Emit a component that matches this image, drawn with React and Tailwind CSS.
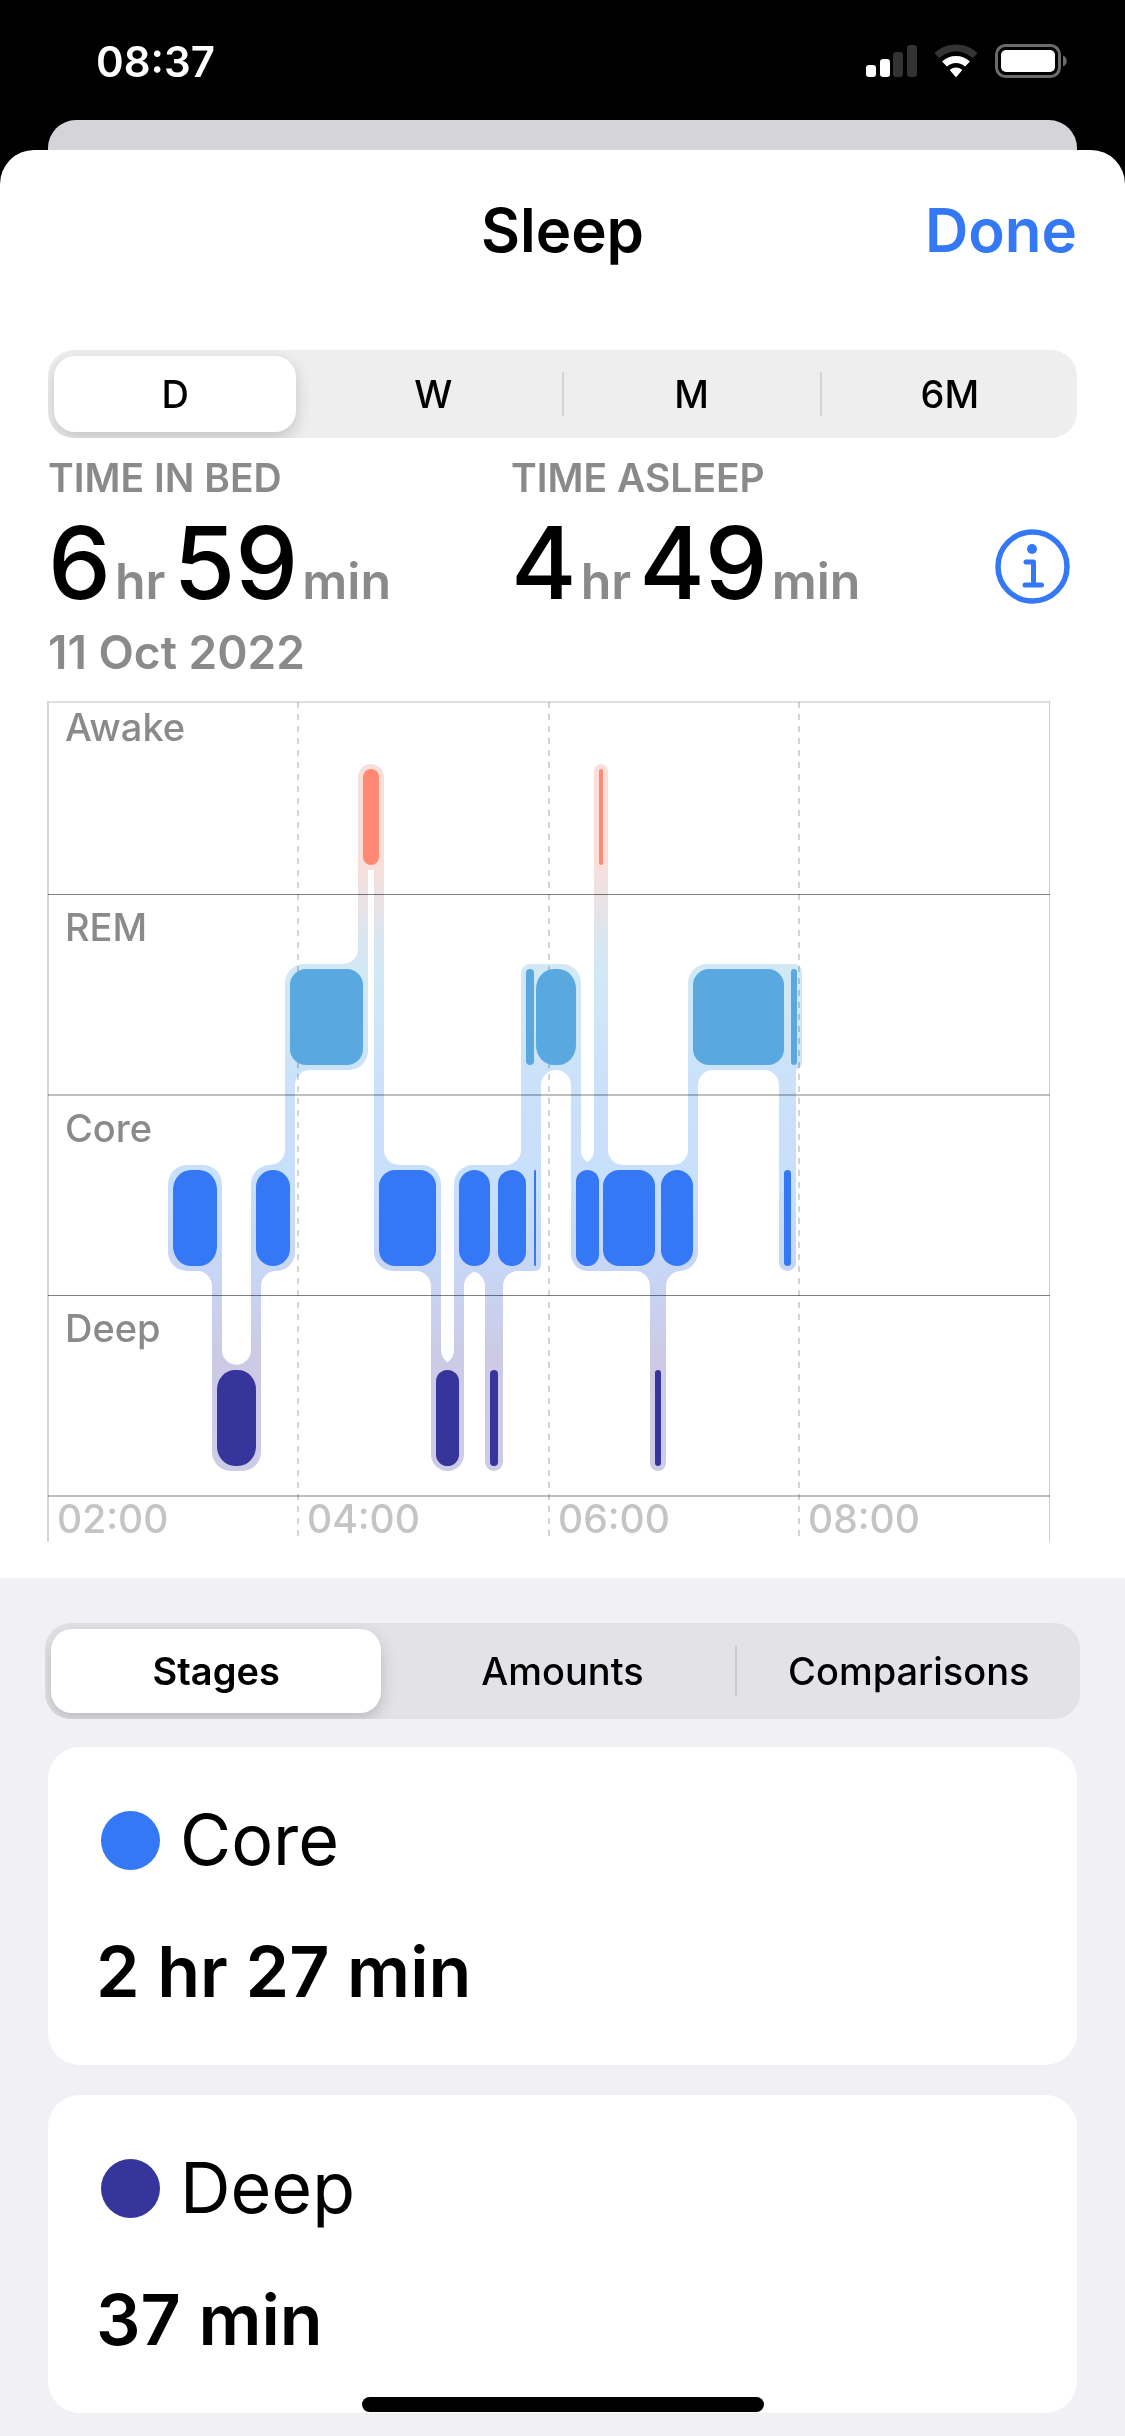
import { Fragment, useState } from "react";

const STAGES = {
  awake: { top: 68, color: "#ff8a73" },
  rem: { top: 268, color: "#59a9e0" },
  core: { top: 469, color: "#3478f6" },
  deep: { top: 669, color: "#36359b" },
};

const BAR_HEIGHT = 96;
const HALO = 5;
const FILLET = 15;
const NIGHT_START = 125;

// each entry is a stage and the x position where it ends
const NIGHT = [
  ["core", 169],
  ["deep", 208],
  ["core", 242],
  ["rem", 315],
  ["awake", 331],
  ["core", 388],
  ["deep", 411],
  ["core", 442],
  ["deep", 450],
  ["core", 478],
  ["rem", 486],
  ["core", 488],
  ["rem", 528],
  ["core", 551],
  ["awake", 555],
  ["core", 607],
  ["deep", 613],
  ["core", 645],
  ["rem", 736],
  ["core", 743],
  ["rem", 749],
];

const bars = NIGHT.map(([stage, end], i) => {
  const x = i === 0 ? NIGHT_START : NIGHT[i - 1][1];
  return { stage, x, end, width: end - x, ...STAGES[stage] };
});

const HALO_STOPS = [
  [63, "#f9dfda"],
  [163, "#f8dfda"],
  [185, "#efe1e1"],
  [212, "#e5e4e8"],
  [235, "#dae6ee"],
  [270, "#d1e8f5"],
  [320, "#cfe6f8"],
  [364, "#cbe3f9"],
  [440, "#c9dffb"],
  [475, "#c8e0fb"],
  [535, "#c6daf8"],
  [575, "#c8d5f4"],
  [620, "#cacfeb"],
  [655, "#cccae5"],
  [770, "#cdcce5"],
];

const TIMES = [
  { label: "02:00", x: 0 },
  { label: "04:00", x: 250 },
  { label: "06:00", x: 501 },
  { label: "08:00", x: 751 },
];

const ROWS = [
  { label: "Awake", y: 40, line: 193, width: 1, color: "#808084" },
  { label: "REM", y: 240, line: 394, width: 2, color: "#bfbfc1" },
  { label: "Core", y: 441, line: 594, width: 1, color: "#808084" },
  { label: "Deep", y: 641, line: 795, width: 2, color: "#bfbfc1" },
];

// concave corner where a connector leaves the edge of a bar's halo
const fillet = (x, y, dx, dy) =>
  `M${x - dx} ${y - dy * 4}H${x + dx * FILLET}V${y}A${FILLET} ${FILLET} 0 0 ${
    dx * dy < 0 ? 1 : 0
  } ${x} ${y + dy * FILLET}H${x - dx}Z`;

const Connector = ({ from, to }) => {
  const down = from.top < to.top;
  const upper = down ? from : to;
  const lower = down ? to : from;
  const side = down ? -1 : 1;
  const x = from.end;
  return (
    <>
      <rect
        x={x - HALO}
        y={upper.top + BAR_HEIGHT / 2}
        width={HALO * 2}
        height={lower.top - upper.top}
      />
      {upper.width >= 20 && (
        <path
          d={fillet(x + side * HALO, upper.top + BAR_HEIGHT + HALO, side, 1)}
        />
      )}
      {lower.width >= 20 && (
        <path d={fillet(x - side * HALO, lower.top - HALO, -side, -1)} />
      )}
    </>
  );
};

// fills the sliver between two bars of one stage that nearly touch
const Bridge = ({ from, to }) => (
  <rect
    x={(from.x + from.end) / 2}
    y={from.top - HALO}
    width={(to.x + to.end) / 2 - (from.x + from.end) / 2}
    height={BAR_HEIGHT + HALO * 2}
  />
);

const SleepChart = () => (
  <svg
    viewBox="0 0 1003 841"
    role="img"
    aria-label="Sleep stages"
    className="block w-full overflow-visible"
  >
    <defs>
      <linearGradient
        id="halo"
        gradientUnits="userSpaceOnUse"
        x1="0"
        y1="0"
        x2="0"
        y2="841"
      >
        {HALO_STOPS.map(([y, color]) => (
          <stop key={y} offset={y / 841} stopColor={color} />
        ))}
      </linearGradient>
    </defs>

    <g fill="url(#halo)">
      {bars.map((bar, i) => {
        const next = bars[i + 1];
        const afterNext = bars[i + 2];
        return (
          <g key={bar.x}>
            <rect
              x={bar.x - HALO}
              y={bar.top - HALO}
              width={bar.width + HALO * 2}
              height={BAR_HEIGHT + HALO * 2}
              rx={Math.min(bar.width / 2 + HALO, 19)}
            />
            {next && <Connector from={bar} to={next} />}
            {afterNext && afterNext.stage === bar.stage && next.width <= 8 && (
              <Bridge from={bar} to={afterNext} />
            )}
          </g>
        );
      })}
    </g>

    <path d="M0 1H1002" stroke="#e0e0e3" strokeWidth="2" />
    <path d="M0 0V841" stroke="#d6d6d8" strokeWidth="2" />
    <path d="M1001.5 0V841" stroke="#d0d0d2" />
    {TIMES.slice(1).map((time) => (
      <path
        key={time.label}
        d={`M${time.x} 1V835`}
        stroke="#000"
        strokeOpacity="0.17"
        strokeWidth="2"
        strokeDasharray="6 6"
      />
    ))}
    {ROWS.map((row) => (
      <path
        key={row.label}
        d={`M0 ${row.width === 1 ? row.line + 0.5 : row.line}H1002`}
        stroke={row.color}
        strokeWidth={row.width}
        className="mix-blend-multiply"
      />
    ))}

    {bars.map((bar) => (
      <rect
        key={bar.x}
        x={bar.x}
        y={bar.top}
        width={bar.width}
        height={BAR_HEIGHT}
        rx={Math.min(bar.width / 2, bar.width < 50 ? 18 : 16)}
        ry={Math.min(bar.width / 2, bar.width < 50 ? 20 : 16)}
        fill={bar.color}
      />
    ))}

    <g fontSize="38" fontWeight="500" fill="#8a8a8d">
      {ROWS.map((row) => (
        <text key={row.label} x="17" y={row.y}>
          {row.label}
        </text>
      ))}
    </g>
    <g fontSize="39" fontWeight="500" fill="#c4c4c6">
      {TIMES.map((time) => (
        <text key={time.label} x={time.x + 9} y="832">
          {time.label}
        </text>
      ))}
    </g>
  </svg>
);

const StatusBar = () => (
  <div className="flex h-[120px] items-center justify-between pt-0.5 pr-[58px] pl-24 text-white">
    <span className="pt-0.5 text-[42px] leading-[48px] font-semibold">
      08:37
    </span>
    <div className="flex items-center gap-[17px]">
      <svg width="51" height="34" viewBox="0 0 51 34" aria-hidden="true">
        <rect x="0" y="21" width="10" height="12" rx="3" fill="#fff" />
        <rect x="14" y="15" width="10" height="18" rx="3" fill="#fff" />
        <rect x="27" y="8" width="10" height="25" rx="3" fill="#333" />
        <rect x="41" y="1" width="10" height="32" rx="3" fill="#333" />
      </svg>
      <svg width="44" height="34" viewBox="0 0 44 34" aria-hidden="true">
        <path
          d="M22 0.500C30.500 0.500 38 3.800 43.500 9.300L38.500 14.200C34 10 28.300 7.500 22 7.500S10 10 5.500 14.200L0.500 9.300C6 3.800 13.500 0.500 22 0.500Z"
          fill="#333"
        />
        <path
          d="M22 12C27.500 12 32.300 14 36 17.500L31 22.500C28.500 20.200 25.500 19 22 19S15.500 20.200 13 22.500L8 17.500C11.700 14 16.500 12 22 12Z"
          fill="#fff"
        />
        <path
          d="M22 23.500C24.500 23.500 26.700 24.400 28.300 26L22.800 32.500Q22 33.300 21.200 32.500L15.700 26C17.300 24.400 19.500 23.500 22 23.500Z"
          fill="#fff"
        />
      </svg>
      <svg width="72" height="34" viewBox="0 0 72 34" aria-hidden="true">
        <rect
          x="1.500"
          y="1.500"
          width="63"
          height="31"
          rx="9"
          fill="none"
          stroke="#6b6b6b"
          strokeWidth="3"
        />
        <rect x="6" y="6" width="54" height="22" rx="5" fill="#fff" />
        <path d="M68 11.500C73 13.500 73 20.500 68 22.500Z" fill="#6b6b6b" />
      </svg>
    </div>
  </div>
);

const Segmented = ({
  label,
  options,
  value,
  onChange,
  className,
  dividerClass,
  selectedClass,
}) => {
  const selected = options.indexOf(value);
  return (
    <div
      role="group"
      aria-label={label}
      className={`flex items-stretch overflow-hidden rounded-[26px] p-1.5 text-[38px] leading-[48px] font-medium ${className}`}
    >
      {options.map((option, i) => (
        <Fragment key={option}>
          {i > 0 && (
            <span className="flex w-4 justify-center py-4">
              <span
                className={`w-0.5 rounded-full ${
                  i === selected || i - 1 === selected
                    ? "bg-transparent"
                    : dividerClass
                }`}
              />
            </span>
          )}
          <button
            type="button"
            aria-pressed={option === value}
            onClick={() => onChange(option)}
            className={`min-w-0 flex-1 basis-0 rounded-[21px] ${
              option === value
                ? `bg-white shadow-[0_6px_16px_rgba(0,0,0,0.18)] ${selectedClass}`
                : ""
            }`}
          >
            {option}
          </button>
        </Fragment>
      ))}
    </div>
  );
};

const Duration = ({ label, hours, minutes }) => (
  <div className="basis-[45%]">
    <h2 className="text-[39px] leading-[48px] font-semibold text-[#8a8a8d]">
      {label}
    </h2>
    <p className="flex items-baseline text-[50px] leading-[48px] font-semibold text-[#8a8a8d]">
      <span className="text-[100px] leading-[122px] font-medium text-black">
        {hours}
      </span>
      <span className="mr-2 ml-1">hr</span>
      <span className="text-[100px] leading-[122px] font-medium text-black">
        {minutes}
      </span>
      <span className="ml-1">min</span>
    </p>
  </div>
);

const StageCard = ({ name, dotClass, total }) => (
  <li className="rounded-[32px] bg-white p-12">
    <div className="flex items-center gap-5 pl-[5px]">
      <span className={`size-[59px] rounded-full ${dotClass}`} />
      <h3 className="text-[70px] leading-[90px]">{name}</h3>
    </div>
    <p className="mt-[42px] text-[70px] leading-[90px] font-semibold">
      {total}
    </p>
  </li>
);

const App = () => {
  const [range, setRange] = useState("D");
  const [view, setView] = useState("Stages");

  return (
    <div className="min-h-screen bg-black font-['Inter',sans-serif] text-black">
      <StatusBar />
      <div className="mx-12 h-[30px] rounded-t-[28px] bg-[#d5d4d9]" />

      <main className="overflow-hidden rounded-t-[34px] bg-white">
        <header className="grid h-40 grid-cols-3 items-center px-12">
          <h1 className="col-start-2 text-center text-[60px] leading-[72px] font-semibold">
            Sleep
          </h1>
          <button
            type="button"
            className="justify-self-end text-[60px] leading-[72px] font-semibold text-[#3478f6]"
          >
            Done
          </button>
        </header>

        <section className="px-12 pt-10 pb-9">
          <Segmented
            label="Range"
            options={["D", "W", "M", "6M"]}
            value={range}
            onChange={setRange}
            className="h-[88px] bg-[#eeeeee]"
            dividerClass="bg-[#d4d4d6]"
            selectedClass="font-medium"
          />

          <div className="mt-4 flex items-end">
            <Duration label="TIME IN BED" hours="6" minutes="59" />
            <Duration label="TIME ASLEEP" hours="4" minutes="49" />
            <button
              type="button"
              aria-label="About sleep"
              className="mr-[7px] mb-5 ml-auto"
            >
              <svg
                width="75"
                height="75"
                viewBox="0 0 75 75"
                fill="none"
                stroke="#3478f6"
                strokeLinecap="round"
                strokeLinejoin="round"
              >
                <circle cx="37.500" cy="37.500" r="34.500" strokeWidth="5.500" />
                <circle cx="37" cy="20" r="5" fill="#3478f6" stroke="none" />
                <path d="M31 33H38.500V56M30 56H46.500" strokeWidth="5" />
              </svg>
            </button>
          </div>
          <p className="text-[46px] leading-[56px] font-semibold text-[#8a8a8d]">
            11 Oct 2022
          </p>

          <div className="mt-[21px] mr-[26px]">
            <SleepChart />
          </div>
        </section>

        <section className="bg-[#f1f0f5] px-12 pt-[45px] pb-6">
          <Segmented
            label="View"
            options={["Stages", "Amounts", "Comparisons"]}
            value={view}
            onChange={setView}
            className="-mx-[3px] h-24 bg-[#e3e2e7]"
            dividerClass="bg-[#cbcbd0]"
            selectedClass="font-semibold"
          />
          <ul className="mt-7 flex flex-col gap-[30px]">
            <StageCard
              name="Core"
              dotClass="bg-[#3478f6]"
              total="2 hr 27 min"
            />
            <StageCard name="Deep" dotClass="bg-[#36359b]" total="37 min" />
          </ul>
        </section>
      </main>

      <div className="fixed inset-x-0 bottom-6 mx-auto h-[15px] w-[402px] rounded-full bg-black" />
    </div>
  );
};

export default App;
